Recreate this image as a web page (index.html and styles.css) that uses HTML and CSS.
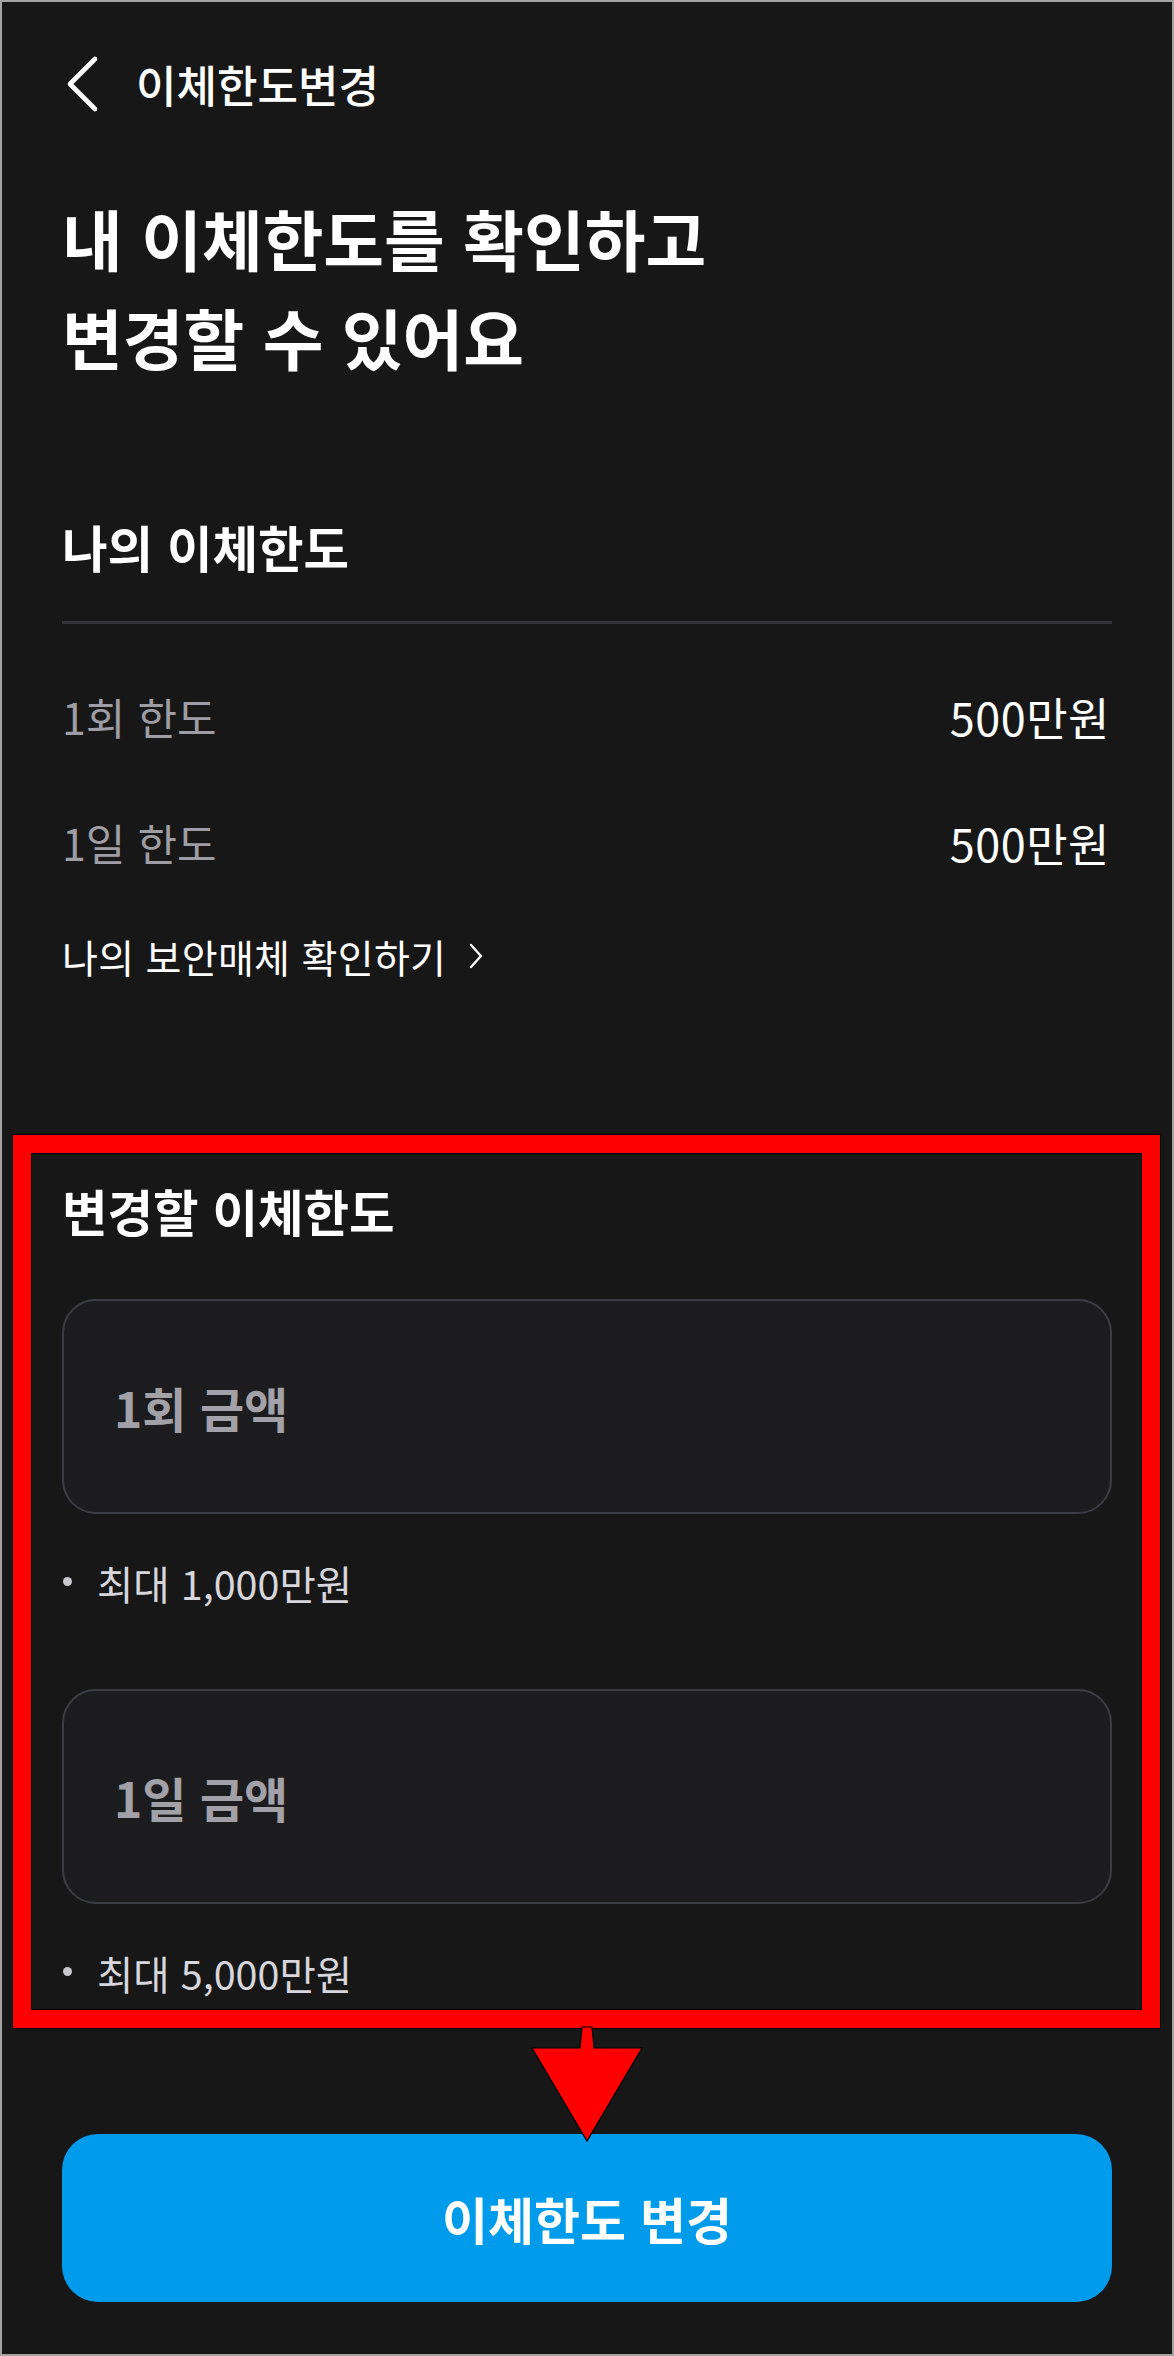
FILE: index.html
```html
<!DOCTYPE html>
<html lang="ko">
<head>
<meta charset="utf-8">
<title>이체한도변경</title>
<link rel="stylesheet" href="styles.css">
</head>
<body>
<div class="page">
  <header class="topbar">
    <svg class="back" viewBox="0 0 36 58" width="36" height="58" aria-hidden="true">
      <path d="M31 4 L6 29 L31 54" fill="none" stroke="#ffffff" stroke-width="4.6" stroke-linecap="round" stroke-linejoin="round"/>
    </svg>
    <span class="topbar-title">이체한도변경</span>
  </header>

  <h1 class="headline">내 이체한도를 확인하고<br>변경할 수 있어요</h1>

  <section class="current">
    <h2 class="section-title">나의 이체한도</h2>
    <div class="divider"></div>
    <div class="row">
      <span class="row-label">1회 한도</span>
      <span class="row-value">500만원</span>
    </div>
    <div class="row">
      <span class="row-label">1일 한도</span>
      <span class="row-value">500만원</span>
    </div>
    <a class="link" href="#">
      <span>나의 보안매체 확인하기</span>
      <svg class="link-chev" viewBox="0 0 16 26" width="16" height="26" aria-hidden="true">
        <path d="M3 2 L13 13 L3 24" fill="none" stroke="#ffffff" stroke-width="2.4" stroke-linecap="round" stroke-linejoin="round"/>
      </svg>
    </a>
  </section>

  <section class="change">
    <h2 class="section-title change-title">변경할 이체한도</h2>
    <input class="amount first" type="text" placeholder="1회 금액">
    <p class="hint"><span class="dot"></span><span>최대 1,000만원</span></p>
    <input class="amount second" type="text" placeholder="1일 금액">
    <p class="hint"><span class="dot"></span><span>최대 5,000만원</span></p>
  </section>

  <button class="submit" type="button">이체한도 변경</button>

  <div class="highlight"></div>
  <svg class="pointer" viewBox="0 0 116 120" width="116" height="120" aria-hidden="true">
    <path d="M52 1 L62 1 L64 22 L112 22 L57 115 L2 22 L50 22 Z" fill="#ff0000" stroke="#000000" stroke-width="1.2" stroke-linejoin="miter"/>
  </svg>
</div>
</body>
</html>
```

FILE: styles.css
```css
* {
  box-sizing: border-box;
}

html, body {
  margin: 0;
  padding: 0;
  background: #171717;
}

body {
  font-family: "Noto Sans CJK KR", "Noto Sans", sans-serif;
  color: #ffffff;
}

.page {
  position: relative;
  width: 1174px;
  height: 2356px;
  border: 2px solid #a3a3a3;
  background: #171717;
  padding: 0 60px;
  overflow: hidden;
}

/* top bar */
.topbar {
  height: 164px;
  display: flex;
  align-items: center;
}

.back {
  display: block;
  flex: none;
  margin-left: 2px;
}

.topbar-title {
  margin-left: 36px;
  font-size: 44px;
  font-weight: 500;
  letter-spacing: 0;
  line-height: 1;
}

/* headline */
.headline {
  margin: 22px 0 0;
  font-size: 66px;
  font-weight: 700;
  line-height: 99px;
  letter-spacing: 0;
}

/* current limits */
.section-title {
  margin: 131px 0 0;
  font-size: 49.5px;
  font-weight: 700;
  line-height: 60px;
  letter-spacing: 0;
}

.divider {
  margin-top: 44px;
  height: 3px;
  background: #333338;
}

.current .divider + .row {
  margin-top: 29px;
}

.row {
  height: 126px;
  display: flex;
  align-items: center;
  justify-content: space-between;
}

.row-label {
  font-size: 43px;
  font-weight: 400;
  color: #9d9da3;
  letter-spacing: 0;
}

.row-value {
  font-size: 45px;
  font-weight: 400;
  color: #ffffff;
  letter-spacing: 0.5px;
  margin-right: 2px;
}

.link {
  margin-top: 26px;
  height: 50px;
  display: flex;
  align-items: center;
  color: #ffffff;
  text-decoration: none;
  font-size: 39px;
  line-height: 50px;
  letter-spacing: 0.3px;
}

.link-chev {
  display: block;
  margin-left: 22px;
}

/* change limits */
.change-title {
  margin-top: 200px;
}

.amount {
  display: block;
  width: 100%;
  height: 215px;
  margin-top: 58px;
  padding: 0 50px;
  border: 2px solid #3b3d43;
  border-radius: 34px;
  background: #1c1c1f;
  color: #ffffff;
  font-family: "Noto Sans CJK KR", "Noto Sans", sans-serif;
  font-size: 48px;
  font-weight: 700;
  letter-spacing: 0;
  outline: none;
}

.amount::placeholder {
  color: #a1a1a7;
  opacity: 1;
}

.amount.second {
  margin-top: 81px;
}

.hint {
  margin: 44px 0 0;
  height: 50px;
  display: flex;
  align-items: center;
  font-size: 39.5px;
  line-height: 50px;
  color: #d6d6dc;
  letter-spacing: 0;
}

.dot {
  flex: none;
  width: 9px;
  height: 9px;
  margin-left: 1px;
  margin-right: 25px;
  margin-top: -4px;
  border-radius: 50%;
  background: #c8c8ce;
}

/* button */
.submit {
  display: block;
  width: 100%;
  height: 168px;
  margin-top: 136px;
  border: none;
  border-radius: 36px;
  background: #009bea;
  color: #ffffff;
  font-family: "Noto Sans CJK KR", "Noto Sans", sans-serif;
  font-size: 50px;
  font-weight: 700;
  letter-spacing: 0;
  cursor: pointer;
}

/* annotation overlay */
.highlight {
  position: absolute;
  left: 11px;
  top: 1133px;
  width: 1147px;
  height: 893px;
  border: 18px solid #ff0000;
  box-shadow: 0 0 0 1px #000000, inset 0 0 0 1px #000000;
  pointer-events: none;
}

.pointer {
  position: absolute;
  left: 528px;
  top: 2024px;
  display: block;
  pointer-events: none;
}
```
